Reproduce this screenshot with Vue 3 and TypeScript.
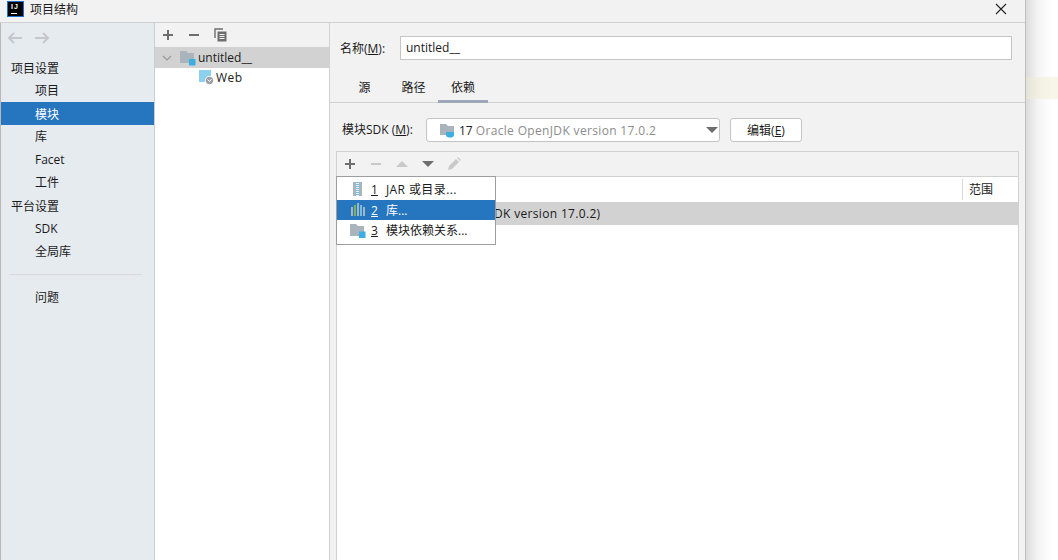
<script setup lang="ts">
interface NavItem {
  label: string
  kind: 'head' | 'item'
  active?: boolean
}

const settingsNav: NavItem[] = [
  { label: '项目设置', kind: 'head' },
  { label: '项目', kind: 'item' },
  { label: '模块', kind: 'item', active: true },
  { label: '库', kind: 'item' },
  { label: 'Facet', kind: 'item' },
  { label: '工件', kind: 'item' },
  { label: '平台设置', kind: 'head' },
  { label: 'SDK', kind: 'item' },
  { label: '全局库', kind: 'item' },
]

const tabs = ['源', '路径', '依赖']
</script>

<template>
  <div class="screen">
    <div class="window">
      <header class="titlebar">
        <span class="logo"><span class="logo-text">IJ</span><span class="logo-bar"></span></span>
        <span class="title">项目结构</span>
        <svg class="close" width="14" height="14" viewBox="0 0 14 14">
          <path d="M2 2 L12 12 M12 2 L2 12" stroke="#222" stroke-width="1.1" fill="none" />
        </svg>
      </header>

      <div class="body">
        <aside class="sidebar">
          <div class="history">
            <svg width="16" height="14" viewBox="0 0 16 14">
              <path d="M2 7 H15 M7 2 L2 7 L7 12" stroke="#c4c8cc" stroke-width="2" fill="none" />
            </svg>
            <svg width="16" height="14" viewBox="0 0 16 14">
              <path d="M1 7 H14 M9 2 L14 7 L9 12" stroke="#c4c8cc" stroke-width="2" fill="none" />
            </svg>
          </div>
          <div
            v-for="item in settingsNav"
            :key="item.label"
            class="nav"
            :class="[item.kind, { active: item.active }]"
          >
            {{ item.label }}
          </div>
          <div class="nav-sep"></div>
          <div class="nav item">问题</div>
        </aside>

        <section class="tree">
          <div class="tree-tools">
            <svg width="12" height="12" viewBox="0 0 12 12"><path d="M6 1 V11 M1 6 H11" stroke="#6e6e6e" stroke-width="2" /></svg>
            <svg width="12" height="12" viewBox="0 0 12 12"><path d="M1 6 H11" stroke="#6e6e6e" stroke-width="2" /></svg>
            <svg width="13" height="14" viewBox="0 0 13 14">
              <path d="M1 10 V1 H9" stroke="#6e6e6e" stroke-width="1.4" fill="none" />
              <path d="M3.5 3.5 H12.5 V13.5 H3.5 Z" fill="#6e6e6e" />
              <path d="M5.5 6.5 H10.5 M5.5 8.5 H10.5 M5.5 10.5 H10.5" stroke="#f2f2f2" stroke-width="1" />
            </svg>
          </div>
          <div class="tree-row selected">
            <svg class="chevron" width="10" height="6" viewBox="0 0 10 6"><path d="M1 1 L5 5 L9 1" stroke="#9a9a9a" stroke-width="1.2" fill="none" /></svg>
            <svg class="tree-icon" width="16" height="16" viewBox="0 0 16 16">
              <path d="M0 1 H6 L8 3 H14 V13 H0 Z" fill="#a9b4bd" />
              <rect x="9" y="9" width="6.5" height="6.5" fill="#3daee0" />
            </svg>
            <span>untitled__</span>
          </div>
          <div class="tree-row child">
            <svg class="tree-icon" width="15" height="15" viewBox="0 0 15 15">
              <rect x="0" y="0" width="12" height="12" fill="#8dd0ee" />
              <circle cx="10.5" cy="10.5" r="4.2" fill="#9aa0a6" stroke="#fff" stroke-width="1" />
              <path d="M8.5 9.5 L10.5 11.5 L12.5 9" stroke="#fff" stroke-width="1" fill="none" />
            </svg>
            <span class="web">Web</span>
          </div>
        </section>

        <main class="detail">
          <div class="name-row">
            <label class="name-label">名称(<u>M</u>):</label>
            <div class="name-input">untitled__</div>
          </div>

          <nav class="tabs">
            <span v-for="(tab, i) in tabs" :key="tab" class="tab" :class="{ current: i === 2 }">{{ tab }}</span>
          </nav>

          <div class="deps">
            <div class="sdk-row">
              <label class="sdk-label">模块SDK (<u>M</u>):</label>
              <div class="sdk-select">
                <svg width="16" height="15" viewBox="0 0 16 15">
                  <path d="M0 1 H6 L8 3 H14 V12 H0 Z" fill="#a9b4bd" />
                  <path d="M6 9 H14 V12 C14 14 12 14.5 10 14.5 C8 14.5 6 14 6 12 Z" fill="#3daee0" />
                </svg>
                <span class="sdk-num">17</span>
                <span class="sdk-name">Oracle OpenJDK version 17.0.2</span>
                <svg class="caret" width="12" height="6" viewBox="0 0 12 6"><path d="M0 0 H12 L6 6 Z" fill="#6e6e6e" /></svg>
              </div>
              <button class="edit-btn">编辑(<u>E</u>)</button>
            </div>

            <div class="table">
              <div class="table-tools">
                <svg height="12" viewBox="0 0 12 12"><path d="M6 1 V11 M1 6 H11" stroke="#6e6e6e" stroke-width="2" /></svg>
                <svg height="12" viewBox="0 0 12 12"><path d="M1 6 H11" stroke="#c9c9c9" stroke-width="2" /></svg>
                <svg height="6" viewBox="0 0 14 6"><path d="M7 0 L13 6 H1 Z" fill="#c9c9c9" /></svg>
                <svg height="6" viewBox="0 0 14 6"><path d="M1 0 H13 L7 6 Z" fill="#6e6e6e" /></svg>
                <svg height="14" viewBox="0 0 14 14">
                  <path d="M1 13 L2 9 L9 2 L12 5 L5 12 Z" fill="#c9c9c9" />
                  <path d="M10 1 L11 0 L14 3 L13 4 Z" fill="#c9c9c9" />
                </svg>
              </div>
              <div class="table-head">
                <span class="col-main"></span>
                <span class="col-scope">范围</span>
              </div>
              <div class="table-row">
                <span class="row-text">DK version 17.0.2)</span>
              </div>
            </div>

            <div class="popup">
              <div class="popup-item">
                <svg width="14" height="14" viewBox="0 0 14 14">
                  <rect x="2" y="0" width="9" height="14" fill="#a9b4bd" />
                  <rect x="5" y="0" width="3" height="14" fill="#e8f5fb" />
                  <path d="M6.5 0 V14" stroke="#6fc0e6" stroke-width="3" stroke-dasharray="1 1" />
                </svg>
                <span class="key"><u>1</u></span>
                <span class="spaced">JAR 或目录...</span>
              </div>
              <div class="popup-item current">
                <svg width="14" height="14" viewBox="0 0 14 14">
                  <rect x="0" y="4" width="2" height="9" fill="#a9b4bd" />
                  <rect x="3" y="2" width="2" height="11" fill="#74b36b" />
                  <rect x="6" y="0" width="2" height="13" fill="#a9b4bd" />
                  <rect x="9" y="2" width="2" height="11" fill="#6fc0e6" />
                  <rect x="12" y="4" width="2" height="9" fill="#a9b4bd" />
                </svg>
                <span class="key"><u>2</u></span>
                <span>库...</span>
              </div>
              <div class="popup-item last">
                <svg width="16" height="15" viewBox="0 0 16 15">
                  <path d="M0 1 H6 L8 3 H14 V13 H0 Z" fill="#a9b4bd" />
                  <rect x="9" y="8.5" width="6.5" height="6.5" fill="#3daee0" />
                </svg>
                <span class="key"><u>3</u></span>
                <span>模块依赖关系...</span>
              </div>
            </div>
          </div>
        </main>
      </div>
    </div>

    <div class="desktop">
      <div class="desktop-line"></div>
    </div>
  </div>
</template>

<style>
html,
body {
  margin: 0;
  background: #fff;
}
</style>

<style scoped>
.screen {
  display: flex;
  width: 1058px;
  height: 560px;
  overflow: hidden;
  font-family: "Open Sans", "Noto Sans CJK SC", sans-serif;
  font-size: 12px;
  color: #1a1a1a;
}

.window {
  display: flex;
  flex-direction: column;
  width: 1026px;
  flex: none;
  box-sizing: border-box;
  border-right: 1px solid #bdbdbd;
  background: #f2f2f2;
}

.titlebar {
  display: flex;
  align-items: center;
  height: 23px;
  flex: none;
  box-sizing: border-box;
  padding: 0 17px 5px 8px;
  border-bottom: 1px solid #d1d1d1;
}

.logo {
  position: relative;
  width: 15px;
  height: 14px;
  background: #000;
  outline: 1px solid #1f6fd0;
  color: #fff;
  font-family: "Liberation Sans", sans-serif;
  font-size: 7px;
  font-weight: 700;
  line-height: 9px;
  letter-spacing: 1px;
  text-indent: 3px;
}

.logo-text {
  display: block;
}

.logo-bar {
  position: absolute;
  left: 3px;
  bottom: 2px;
  width: 6px;
  height: 1px;
  background: #fff;
}

.title {
  margin-left: 7px;
  font-size: 12px;
}

.close {
  margin-left: auto;
}

.body {
  display: flex;
  flex: 1;
  min-height: 0;
}

.sidebar {
  width: 155px;
  flex: none;
  box-sizing: border-box;
  border-left: 1px solid #b8b8b8;
  border-right: 1px solid #c9ced3;
  background: #e6ebf0;
}

.history {
  display: flex;
  gap: 11px;
  height: 33px;
  box-sizing: border-box;
  align-items: center;
  padding: 0 0 4px 6px;
}

.nav {
  height: 23px;
  line-height: 23px;
}

.nav.head {
  padding-left: 10px;
  line-height: 25px;
}

.nav.item {
  padding-left: 34px;
}

.nav.active {
  background: #2675bf;
  color: #fff;
  line-height: 25px;
}

.nav-sep {
  height: 1px;
  margin: 11px 12px 11px 8px;
  background: #d9dadb;
}

.tree {
  width: 175px;
  flex: none;
  box-sizing: border-box;
  border-right: 1px solid #d1d1d1;
  background: #fff;
}

.tree-tools {
  display: flex;
  align-items: center;
  gap: 14px;
  height: 24px;
  padding-left: 7px;
  background: #f2f2f2;
}

.tree-row {
  display: flex;
  align-items: center;
  height: 21px;
}

.tree-row.selected {
  background: #d2d2d2;
}

.chevron {
  margin-left: 7px;
  margin-right: 8px;
}

.tree-icon {
  margin-right: 2px;
}

.tree-row.child {
  height: 19px;
  padding-left: 44px;
}

.web {
  letter-spacing: 0.5px;
}

.detail {
  flex: 1;
  min-width: 0;
  display: flex;
  flex-direction: column;
}

.name-row {
  display: flex;
  align-items: center;
  height: 24px;
  margin-top: 13px;
  padding: 0 13px 0 10px;
}

.name-label {
  width: 60px;
  flex: none;
}

.name-input {
  flex: 1;
  height: 24px;
  line-height: 22px;
  box-sizing: border-box;
  padding-left: 5px;
  border: 1px solid #c4c4c4;
  background: #fff;
}

.tabs {
  display: flex;
  height: 24px;
  margin-top: 18px;
  padding-left: 10px;
  border-bottom: 1px solid #d1d1d1;
}

.tab {
  width: 49px;
  box-sizing: border-box;
  text-align: center;
  line-height: 19px;
}

.tab.current {
  width: 50px;
  border-bottom: 3px solid #9ca7b8;
  height: 25px;
}

.deps {
  position: relative;
  flex: 1;
  padding: 15px 6px 0;
}

.sdk-row {
  display: flex;
  align-items: center;
  height: 24px;
}

.sdk-label {
  width: 90px;
  flex: none;
  padding: 0 0 2px 6px;
  box-sizing: border-box;
}

.sdk-select {
  display: flex;
  align-items: center;
  width: 294px;
  height: 24px;
  box-sizing: border-box;
  padding: 0 0 0 13px;
  border: 1px solid #c4c4c4;
  border-radius: 3px;
  background: #fff;
}

.sdk-num {
  margin-left: 3px;
}

.sdk-name {
  margin-left: 3px;
  color: #8c8c8c;
  letter-spacing: 0.34px;
}

.caret {
  margin-left: auto;
  margin-right: 1px;
}

.edit-btn {
  width: 72px;
  height: 24px;
  margin-left: 10px;
  padding: 0;
  border: 1px solid #c4c4c4;
  border-radius: 3px;
  background: #fff;
  color: inherit;
  font: inherit;
}

.table {
  height: 420px;
  margin-top: 9px;
  border: 1px solid #d1d1d1;
  background: #fff;
}

.table-tools {
  display: flex;
  align-items: center;
  gap: 12px;
  height: 24px;
  padding-left: 6px;
  border-bottom: 1px solid #d1d1d1;
  background: #f2f2f2;
}

.table-tools svg {
  width: 14px;
}

.table-head {
  display: flex;
  height: 25px;
  align-items: center;
}

.col-main {
  flex: 1;
}

.col-scope {
  width: 49px;
  height: 21px;
  line-height: 21px;
  padding-left: 6px;
  border-left: 1px solid #d8d8d8;
}

.table-row {
  height: 23px;
  line-height: 23px;
  background: #d2d2d2;
  padding-left: 157px;
  letter-spacing: 0.33px;
}

.popup {
  position: absolute;
  top: 73px;
  left: 6px;
  width: 160px;
  box-sizing: border-box;
  padding: 2px 0;
  border: 1px solid #9e9e9e;
  background: #fff;
}

.popup-item {
  display: flex;
  align-items: center;
  height: 20px;
  margin-bottom: 1px;
  padding-left: 13px;
}

.popup-item.last {
  height: 18px;
  margin-bottom: 3px;
}

.popup-item svg {
  width: 16px;
  flex: none;
}

.popup-item .key {
  width: 15px;
  margin-left: 5px;
}

.spaced {
  letter-spacing: 0.4px;
}

.popup-item.current {
  background: #2675bf;
  color: #fff;
}

.desktop {
  position: relative;
  flex: 1;
  background: linear-gradient(90deg, #dcdcdc 0, #f4f4f4 12px, #fff 26px);
}

.desktop-line {
  position: absolute;
  top: 77px;
  left: 0;
  right: 0;
  height: 22px;
  background: rgba(240, 235, 205, 0.45);
}
</style>
